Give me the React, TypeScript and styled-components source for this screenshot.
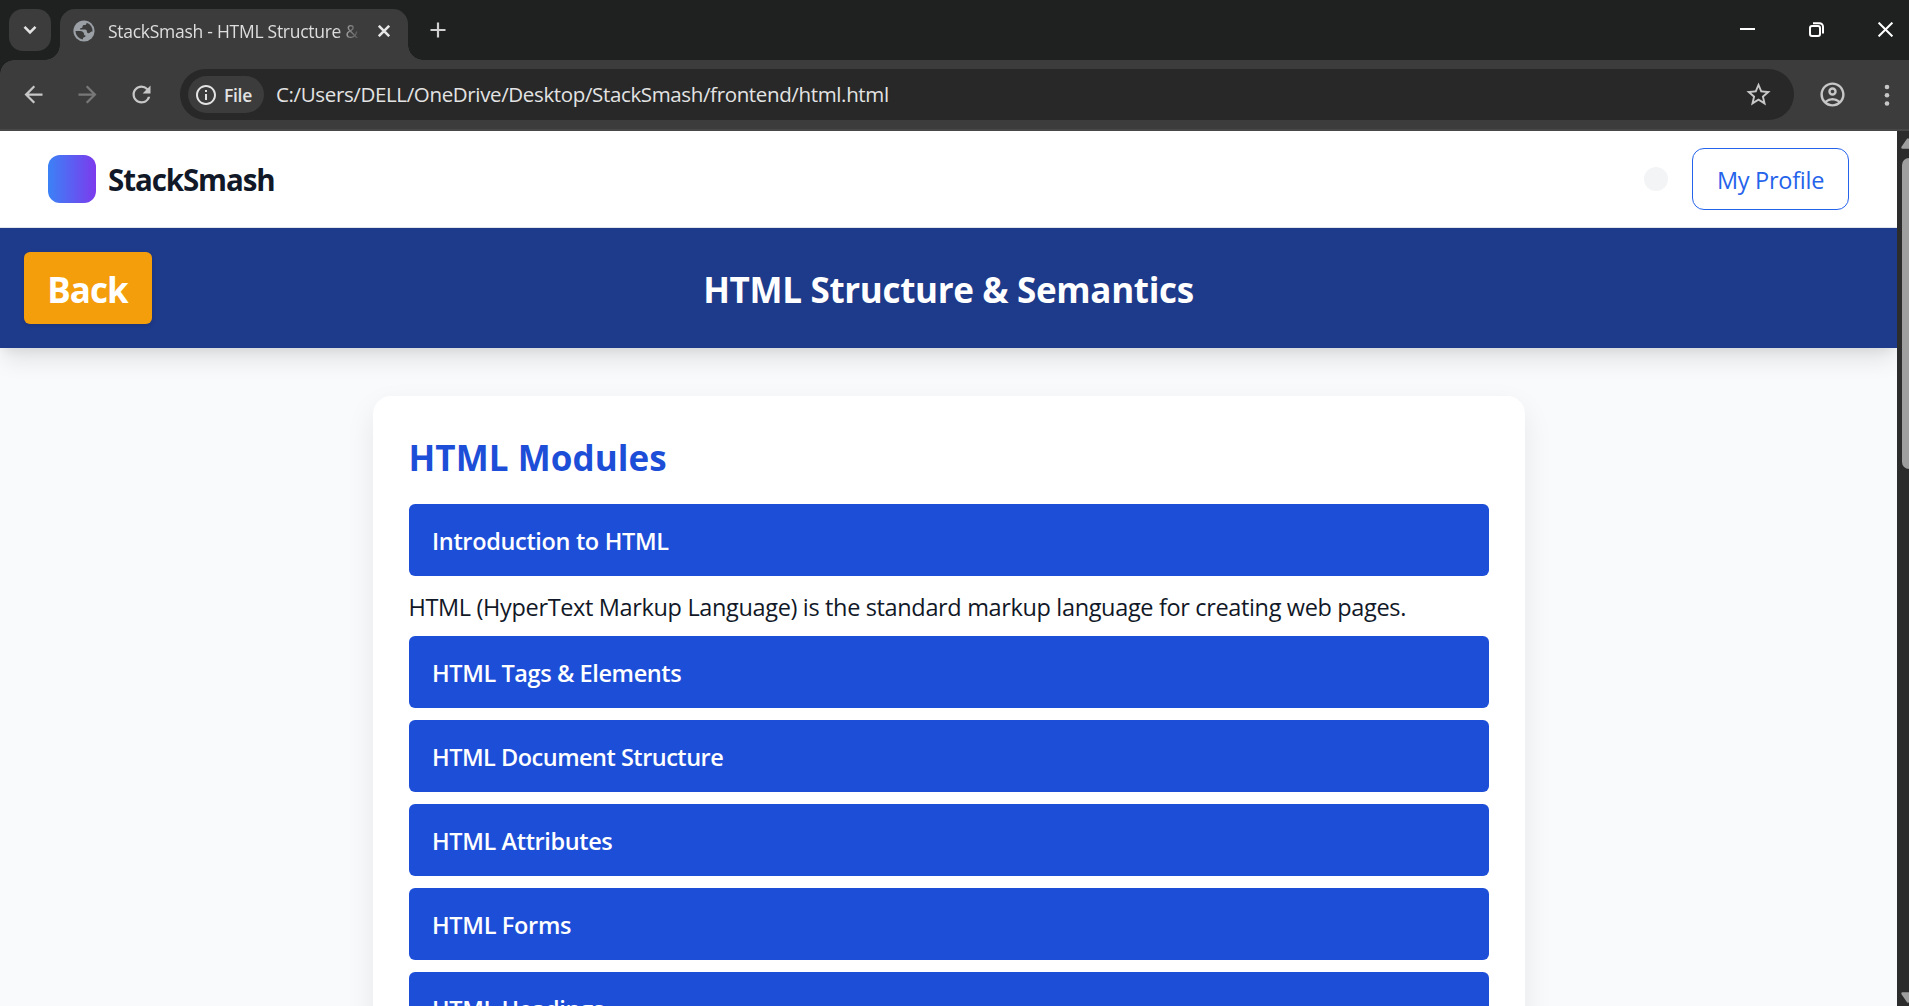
import React from "react";
import styled, { createGlobalStyle } from "styled-components";
import {
  MdArrowBack,
  MdArrowForward,
  MdRefresh,
  MdInfoOutline,
  MdStarBorder,
  MdOutlineAccountCircle,
} from "react-icons/md";

const GlobalStyle = createGlobalStyle`
  * { box-sizing: border-box; }
  body { margin: 0; overflow: hidden; }
  svg { display: block; flex: none; }
`;

const Window = styled.div`
  display: flex;
  flex-direction: column;
  width: 1909px;
  height: 1006px;
  overflow: hidden;
  font-family: "Open Sans", "Noto Sans", sans-serif;
`;

/* ---------- browser chrome ---------- */

const TabStrip = styled.div`
  display: flex;
  align-items: flex-start;
  flex: none;
  height: 60px;
  padding: 9px 16px 0 9px;
  background: #1f2120;
`;

const TabSearch = styled.button`
  display: flex;
  align-items: center;
  justify-content: center;
  width: 42px;
  height: 42px;
  margin-right: 9px;
  padding: 0;
  border: 0;
  border-radius: 14px;
  background: #3c3c3c;
`;

const Tab = styled.div`
  position: relative;
  display: flex;
  align-items: center;
  width: 348px;
  height: 51px;
  padding: 0 18px 8px 13px;
  border-radius: 15px 15px 0 0;
  background: #3c3c3c;

  &::before,
  &::after {
    content: "";
    position: absolute;
    bottom: 0;
    width: 15px;
    height: 15px;
  }
  &::before {
    left: -15px;
    background: radial-gradient(circle at 0 0, transparent 14.5px, #3c3c3c 15px);
  }
  &::after {
    right: -15px;
    background: radial-gradient(circle at 100% 0, transparent 14.5px, #3c3c3c 15px);
  }
`;

const TabTitle = styled.div`
  width: 252px;
  margin: 0 18px 0 13px;
  overflow: hidden;
  white-space: nowrap;
  font-size: 17.5px;
  line-height: 26px;
  letter-spacing: -0.27px;
  color: #dedede;
  mask-image: linear-gradient(90deg, #000 228px, transparent 254px);
`;

const NewTab = styled.div`
  padding: 12px 0 0 21px;
`;

const WindowControls = styled.div`
  display: flex;
  gap: 54px;
  margin-left: auto;
  padding-top: 13px;
`;

const Toolbar = styled.div`
  display: flex;
  align-items: center;
  flex: none;
  height: 71px;
  padding: 0 13px 0 19.5px;
  border-bottom: 2px solid #474747;
  background: radial-gradient(circle at 14px 14px, #3c3c3c 13.5px, #1f2120 14px) 0 0 / 14px 14px no-repeat,
    #3c3c3c;
`;

const NavIcon = styled.div<{ $dim?: boolean }>`
  display: flex;
  justify-content: center;
  width: 27px;
  margin-right: 27px;
  font-size: 27px;
  color: ${(p) => (p.$dim ? "#787878" : "#c7c7c7")};
`;

const Omnibox = styled.div`
  display: flex;
  align-items: center;
  width: 1614px;
  height: 51px;
  margin-left: -1.5px;
  padding: 0 21.5px 0 8px;
  border-radius: 26px;
  background: #282828;
  color: #e3e3e3;
`;

const FileChip = styled.div`
  display: flex;
  align-items: center;
  gap: 6px;
  width: 76px;
  height: 37px;
  padding-left: 6px;
  border-radius: 19px;
  background: #3c3c3c;
  font-size: 17.5px;
  font-weight: 600;
  letter-spacing: -0.3px;
`;

const Url = styled.div`
  flex: 1;
  padding: 0 0 1px 12px;
  font-size: 20.5px;
  line-height: 30px;
  letter-spacing: -0.36px;
`;

const ToolbarEnd = styled.div`
  display: flex;
  align-items: center;
  gap: 37px;
  margin-left: 24px;
  color: #c7c7c7;
`;

/* ---------- page ---------- */

const Viewport = styled.div`
  display: flex;
  flex: 1;
  min-height: 0;
`;

const Page = styled.div`
  flex: 1;
  height: 875px;
  overflow: hidden;
  background: #f9fafc;
  color: #111827;
`;

const SiteNav = styled.nav`
  display: flex;
  align-items: center;
  justify-content: space-between;
  height: 97px;
  padding: 0 48px;
  border-bottom: 1px solid #e2e5ea;
  background: #fff;
`;

const Brand = styled.div`
  display: flex;
  align-items: center;
  gap: 12px;
`;

const BrandName = styled.span`
  padding-top: 2px;
  font-size: 29.5px;
  font-weight: 700;
  line-height: 42px;
  letter-spacing: -1.08px;
`;

const LogoMark = styled.div`
  width: 48px;
  height: 48px;
  border-radius: 12px;
  background: linear-gradient(90deg, #3b82f6, #7c3aed);
`;

const NavActions = styled.div`
  display: flex;
  align-items: center;
  gap: 24px;
`;

const ThemeDot = styled.div`
  width: 24px;
  height: 24px;
  border-radius: 50%;
  background: #f3f4f6;
`;

const ProfileButton = styled.button`
  width: 157px;
  height: 62px;
  padding: 2px 0 0;
  border: 1px solid #2563eb;
  border-radius: 12px;
  background: #fff;
  color: #2563eb;
  font-family: inherit;
  font-size: 23.5px;
  letter-spacing: -0.27px;
`;

const Hero = styled.header`
  display: grid;
  grid-template-columns: 1fr auto 1fr;
  align-items: center;
  height: 120px;
  padding: 0 24px;
  background: #1e3a8a;
  color: #fff;
  box-shadow: 0 15px 22px -4px rgba(0, 0, 0, 0.1), 0 6px 9px -3px rgba(0, 0, 0, 0.06);
`;

const BackButton = styled.button`
  justify-self: start;
  width: 128px;
  height: 72px;
  padding: 2px 1px 0 0;
  border: 0;
  border-radius: 6px;
  background: #f59e0b;
  color: #fff;
  font-family: inherit;
  font-size: 35px;
  font-weight: 700;
  letter-spacing: -1px;
  box-shadow: 0 2px 4px rgba(0, 0, 0, 0.1);
`;

const HeroTitle = styled.h1`
  margin: 4px 0 0;
  font-size: 35px;
  font-weight: 700;
  line-height: 50px;
  letter-spacing: -0.33px;
`;

const Card = styled.main`
  width: 1152px;
  height: 1200px;
  margin: 48px auto 0;
  padding: 37px 36px 36px;
  border-radius: 18px;
  background: #fff;
  box-shadow: 0 12px 30px rgba(0, 0, 0, 0.08);
`;

const CardTitle = styled.h2`
  margin: 0 0 21px;
  font-size: 35px;
  font-weight: 700;
  line-height: 50px;
  letter-spacing: 0.05px;
  color: #1d4ed8;
`;

const ModuleButton = styled.button<{ $tracking: number }>`
  display: block;
  width: 100%;
  height: 72px;
  margin-bottom: 12px;
  padding: 2px 24px 0 23.5px;
  border: 0;
  border-radius: 6px;
  background: #1d4ed8;
  color: #fff;
  font-family: inherit;
  font-size: 23.5px;
  font-weight: 600;
  letter-spacing: ${(p) => p.$tracking}px;
  text-align: left;
`;

const ModuleText = styled.p`
  height: 48px;
  margin: 0;
  padding-top: 1px;
  font-size: 23.5px;
  line-height: 36px;
  letter-spacing: -0.35px;
  white-space: nowrap;
`;

const Scrollbar = styled.div`
  display: flex;
  flex-direction: column;
  justify-content: space-between;
  width: 12px;
  overflow: hidden;
  background: #2c2c2c;
`;

const ScrollThumb = styled.div`
  width: 14px;
  height: 311px;
  margin: 9px 0 auto 5px;
  border-radius: 7px;
  background: #9f9f9f;
`;

const ScrollArrow = styled.svg<{ $down?: boolean }>`
  margin: ${(p) => (p.$down ? "0 0 3px 4px" : "7px 0 0 4px")};
  transform: ${(p) => (p.$down ? "scaleY(-1)" : "none")};
`;

const modules = [
  { title: "Introduction to HTML", tracking: -0.34, text: "HTML (HyperText Markup Language) is the standard markup language for creating web pages." },
  { title: "HTML Tags & Elements", tracking: -0.4 },
  { title: "HTML Document Structure", tracking: -0.5 },
  { title: "HTML Attributes", tracking: -0.38 },
  { title: "HTML Forms", tracking: -0.32 },
  { title: "HTML Headings", tracking: -0.4 },
];

const Globe = () => (
  <svg width="22" height="22" viewBox="0 0 22 22">
    <circle cx="11" cy="11" r="10.6" fill="#9aa0a6" />
    <path
      d="M13.600 2.700c0 1.500-.8 2.300-2.200 2.300-1.200 0-1.900.7-1.900 1.700 0 .9-.6 1.300-1.500 1.300s-1.200.8-.8 1.600h4.700c1.300 0 2 .8 2 2 0 1 .6 1.600 1.600 1.600 1.500 0 1.700-1.200 2.600-1.500.5-.2 1-.1 1.400.2a8.500 8.500 0 0 0-5.900-9.200z"
      fill="#3c3c3c"
    />
    <path
      d="M2.500 10.900h4.700c2.300 0 3.900 1.500 3.900 3.500 0 .8.600 1.100 1.500 1.100 0 1.600-1.200 1.700-2.200 1.900-.5.200-.5 1.100-.5 2A8.500 8.500 0 0 1 2.500 10.900z"
      fill="#3c3c3c"
    />
  </svg>
);

const Arrow = ({ down }: { down?: boolean }) => (
  <ScrollArrow $down={down} width="14" height="11" viewBox="0 0 14 11">
    <path d="M7 1.500L12.500 9.500H1.500z" fill="#9f9f9f" stroke="#9f9f9f" strokeWidth="2.400" strokeLinejoin="round" />
  </ScrollArrow>
);

export default function App() {
  return (
    <Window>
      <GlobalStyle />
      <TabStrip>
        <TabSearch>
          <svg width="14" height="10" viewBox="0 0 14 10" fill="none" stroke="#e3e3e3" strokeWidth="2.600">
            <path d="M1.500 1.800L7 7.300l5.500-5.500" />
          </svg>
        </TabSearch>
        <Tab>
          <Globe />
          <TabTitle>StackSmash - HTML Structure &amp;</TabTitle>
          <svg width="12" height="12" viewBox="0 0 12 12" stroke="#e8e8e8" strokeWidth="2.500">
            <path d="M.8.8l10.400 10.400M11.200.8L.8 11.200" />
          </svg>
        </Tab>
        <NewTab>
          <svg width="18" height="18" viewBox="0 0 18 18" stroke="#d0d0d0" strokeWidth="2.200">
            <path d="M9 1.500v15M1.500 9h15" />
          </svg>
        </NewTab>
        <WindowControls>
          <svg width="15" height="15" viewBox="0 0 15 15">
            <path d="M0 7h15" stroke="#fff" strokeWidth="2" />
          </svg>
          <svg width="15" height="15" viewBox="0 0 15 15" fill="none" stroke="#fff" strokeWidth="2">
            <rect x="1" y="4" width="10" height="10" rx="2" />
            <path d="M4 1.200h6.500A3.500 3.500 0 0 1 14 4.700V11.500" />
          </svg>
          <svg width="15" height="15" viewBox="0 0 15 15" stroke="#fff" strokeWidth="2">
            <path d="M.6.6l13.800 13.800M14.400.6L.6 14.400" />
          </svg>
        </WindowControls>
      </TabStrip>

      <Toolbar>
        <NavIcon><MdArrowBack /></NavIcon>
        <NavIcon $dim><MdArrowForward /></NavIcon>
        <NavIcon><MdRefresh /></NavIcon>
        <Omnibox>
          <FileChip>
            <MdInfoOutline size={24} />
            File
          </FileChip>
          <Url>C:/Users/DELL/OneDrive/Desktop/StackSmash/frontend/html.html</Url>
          <MdStarBorder size={29} color="#c7c7c7" />
        </Omnibox>
        <ToolbarEnd>
          <MdOutlineAccountCircle size={29} />
          <svg width="6" height="24" viewBox="0 0 6 24" fill="currentColor">
            <circle cx="3" cy="4" r="2.300" />
            <circle cx="3" cy="12.300" r="2.300" />
            <circle cx="3" cy="20.500" r="2.300" />
          </svg>
        </ToolbarEnd>
      </Toolbar>

      <Viewport>
        <Page>
          <SiteNav>
            <Brand>
              <LogoMark />
              <BrandName>StackSmash</BrandName>
            </Brand>
            <NavActions>
              <ThemeDot />
              <ProfileButton>My Profile</ProfileButton>
            </NavActions>
          </SiteNav>
          <Hero>
            <BackButton>Back</BackButton>
            <HeroTitle>HTML Structure &amp; Semantics</HeroTitle>
          </Hero>
          <Card>
            <CardTitle>HTML Modules</CardTitle>
            {modules.map((m) => (
              <React.Fragment key={m.title}>
                <ModuleButton $tracking={m.tracking}>{m.title}</ModuleButton>
                {m.text && <ModuleText>{m.text}</ModuleText>}
              </React.Fragment>
            ))}
          </Card>
        </Page>
        <Scrollbar>
          <Arrow />
          <ScrollThumb />
          <Arrow down />
        </Scrollbar>
      </Viewport>
    </Window>
  );
}
